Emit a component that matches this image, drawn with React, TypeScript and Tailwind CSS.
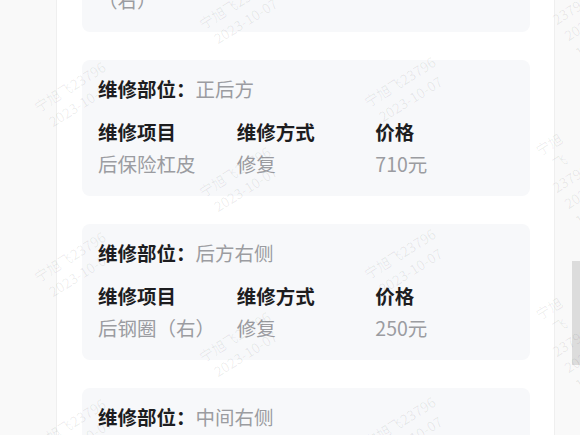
import React from 'react';

type Item = { name: string; method: string; price: string };
type Repair = { part: string; items: Item[] };

const repairs: Repair[] = [
  { part: '后方右侧', items: [{ name: '后叶子板内衬（右）', method: '修复', price: '180元' }] },
  { part: '正后方', items: [{ name: '后保险杠皮', method: '修复', price: '710元' }] },
  { part: '后方右侧', items: [{ name: '后钢圈（右）', method: '修复', price: '250元' }] },
  { part: '中间右侧', items: [{ name: '后门（右）', method: '钣喷', price: '600元' }] },
];

const marks = [
  { x: 75, y: 95 },
  { x: 405, y: 90 },
  { x: 240, y: 180 },
  { x: 570, y: 178 },
  { x: 240, y: 12 },
  { x: 570, y: 10 },
  { x: 75, y: 265 },
  { x: 405, y: 262 },
  { x: 240, y: 345 },
  { x: 570, y: 342 },
  { x: 75, y: 432 },
  { x: 405, y: 430 },
];

function RepairCard({ repair }: { repair: Repair }) {
  return (
    <div className="rounded-lg bg-[#f7f8fa] px-4 pt-[13px] pb-4">
      <div className="leading-[32px]">
        <span className="font-semibold text-[#1d1d1f]">维修部位：</span>
        <span className="text-[#9b9ca1]">{repair.part}</span>
      </div>
      <div className="mt-[11px] grid grid-cols-3 leading-[32px]">
        <div className="font-semibold text-[#1d1d1f]">维修项目</div>
        <div className="font-semibold text-[#1d1d1f]">维修方式</div>
        <div className="font-semibold text-[#1d1d1f]">价格</div>
        {repair.items.map((item, i) => (
          <React.Fragment key={i}>
            <div className="text-[#9b9ca1]">{item.name}</div>
            <div className="text-[#9b9ca1]">{item.method}</div>
            <div className="text-[#9b9ca1]">{item.price}</div>
          </React.Fragment>
        ))}
      </div>
    </div>
  );
}

export default function App() {
  return (
    <div className="relative flex h-[435px] w-[580px] overflow-hidden bg-[#f9f9f9] font-['Noto_Sans_CJK_SC','Noto_Sans',sans-serif] text-[19.5px]">
      <div className="w-[56px] shrink-0" />
      <div className="w-[499px] shrink-0 border-x border-[#efefef] bg-white pl-[25px] pr-[24px]">
        <div className="-mt-[136px] flex flex-col gap-[28px]">
          {repairs.map((r, i) => (
            <RepairCard key={i} repair={r} />
          ))}
        </div>
      </div>
      <div className="relative flex-1">
        <div className="absolute right-0 top-[261px] h-[104px] w-[8px] bg-[#dcdcdc]" />
      </div>

      {/* watermarks */}
      {marks.map((m, i) => (
        <div
          key={i}
          className="pointer-events-none absolute -translate-x-1/2 -translate-y-1/2 -rotate-[32deg] text-center text-[14px] leading-[20px] text-black/[0.07]"
          style={{ left: m.x, top: m.y }}
        >
          <div>宁旭飞23796</div>
          <div>2023-10-07</div>
        </div>
      ))}
    </div>
  );
}
